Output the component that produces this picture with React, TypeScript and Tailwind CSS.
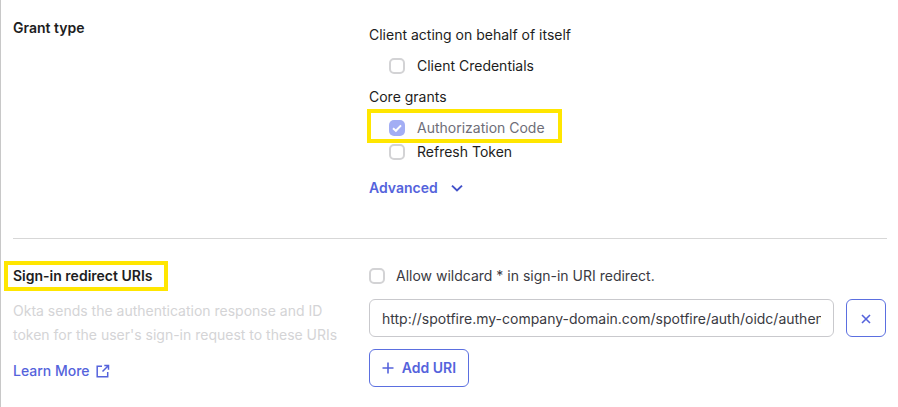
const font = "font-['Inter',sans-serif]"

function Checkbox({ checked }: { checked?: boolean }) {
  if (checked) {
    return (
      <span className="flex h-4 w-4 shrink-0 items-center justify-center rounded-[5px] bg-[#a3aef4]">
        <svg width="10" height="10" viewBox="0 0 10 10" fill="none">
          <path d="M1 5.2 3.9 7.8 9 2.4" stroke="#fff" strokeWidth="2" />
        </svg>
      </span>
    )
  }
  return <span className="h-4 w-4 shrink-0 rounded-[5px] border-2 border-[#d3d3d5] bg-white" />
}

export default function App() {
  return (
    <div className={`${font} h-[407px] w-[898px] overflow-hidden border-l border-[#c8c8c8] bg-white pl-3 pr-[11px] text-sm text-[#1d1d21]`}>
      {/* Grant type */}
      <div className="box-content flex h-[238px] border-b border-[#d7d7d7]">
        <div className="w-[356px] pt-[18px] font-semibold leading-5">Grant type</div>
        <div className="flex-1">
          <p className="mt-[25px] leading-5">Client acting on behalf of itself</p>
          <div className="mt-[11px] flex h-5 items-center gap-[12px] pl-[20px]">
            <Checkbox />
            <span>Client Credentials</span>
          </div>
          <p className="mt-[11px] leading-5">Core grants</p>
          <div className="-ml-[2px] mt-[2px] flex h-[34px] w-[195px] items-center gap-[12px] border-4 border-[#ffe600] pl-[18px] pt-1 text-[#6e6e78]">
            <Checkbox checked />
            <span>Authorization Code</span>
          </div>
          <div className="-mt-[1px] flex h-5 items-center gap-[12px] pl-[20px]">
            <Checkbox />
            <span>Refresh Token</span>
          </div>
          <div className="mt-4 flex h-5 items-center gap-[12px] font-semibold text-[#5563dc]">
            <span>Advanced</span>
            <svg width="14" height="14" viewBox="0 0 14 14" fill="none">
              <path d="M2 4.6 7 9.4l5-4.8" stroke="#4352c9" strokeWidth="2" />
            </svg>
          </div>
        </div>
      </div>

      {/* Sign-in redirect URIs */}
      <div className="flex">
        <div className="w-[356px]">
          <div className="-ml-[9px] mt-[22px] flex h-[30px] w-[164px] items-center border-4 border-[#ffe600] pl-[5px] font-semibold">
            Sign-in redirect URIs
          </div>
          <p className="mt-[8px] w-[330px] leading-6 text-[#d4d4d6]">
            Okta sends the authentication response and ID token for the user's sign-in request to these URIs
          </p>
          <div className="mt-[14px] flex h-5 items-center gap-[6px] font-medium text-[#5563dc]">
            <span>Learn More</span>
            <svg width="14" height="14" viewBox="0 0 14 14" fill="none" stroke="#5563dc" strokeWidth="1.5">
              <path d="M6 2.2H1.2v10.5h10.5V8" />
              <path d="M8.3 1.5h4.2v4.2M12.5 1.5 6.5 7.5" />
            </svg>
          </div>
        </div>
        <div className="flex-1">
          <div className="mt-[27px] flex h-5 items-center gap-[11px]">
            <Checkbox />
            <span className="text-[#3a3a42]">Allow wildcard * in sign-in URI redirect.</span>
          </div>
          <div className="mt-[13px] flex gap-3">
            <div className="flex h-[38px] w-[465px] items-center overflow-hidden rounded-md border border-[#c9c9cd] px-3 pt-[2px]">
              <span className="block w-full overflow-hidden whitespace-nowrap text-[#3a3a42]">
                http://spotfire.my-company-domain.com/spotfire/auth/oidc/authenticate
              </span>
            </div>
            <button className="flex h-[38px] w-10 items-center justify-center rounded-md border border-[#5b6fe0] bg-white pt-[2px]">
              <svg width="12" height="12" viewBox="0 0 12 12" fill="none">
                <path d="M2 2l8 8M10 2l-8 8" stroke="#5563dc" strokeWidth="1.6" />
              </svg>
            </button>
          </div>
          <button className="mt-3 flex h-[38px] w-[100px] items-center justify-center gap-2 rounded-md border border-[#5b6fe0] bg-white font-semibold text-[#5563dc]">
            <svg width="12" height="12" viewBox="0 0 12 12" fill="none">
              <path d="M6 .5v11M.5 6h11" stroke="#5563dc" strokeWidth="1.6" />
            </svg>
            Add URI
          </button>
        </div>
      </div>
    </div>
  )
}
